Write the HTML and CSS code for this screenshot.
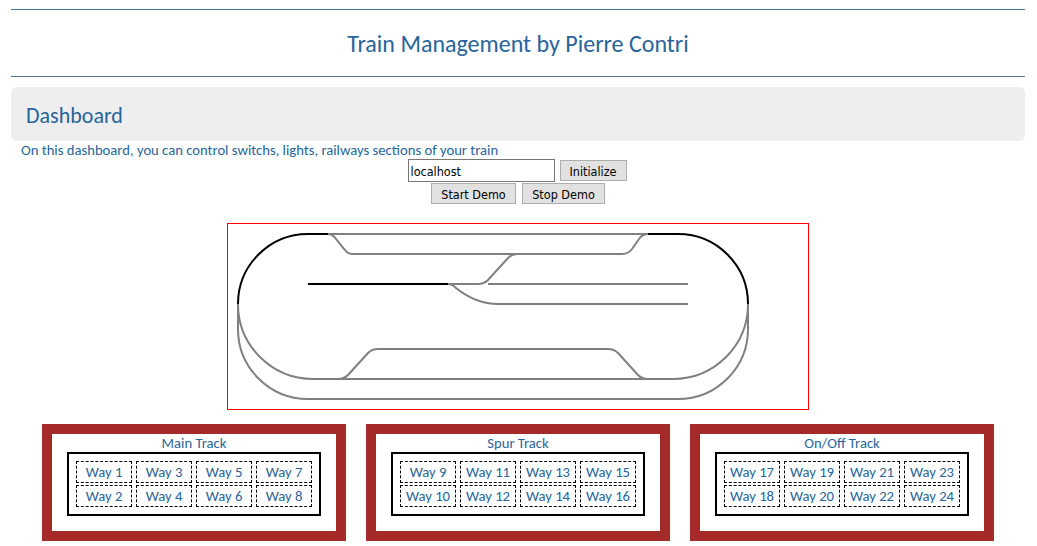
FILE: index.html
```html
<!DOCTYPE html>
<html lang="en">
<head>
<meta charset="utf-8">
<title>Train Management</title>
<link rel="stylesheet" href="styles.css">
</head>
<body>
<header class="site-header"><h1 class="site-title">Train Management by Pierre Contri</h1></header>
<main>
<h2 class="section-title">Dashboard</h2>
<p class="intro">On this dashboard, you can control switchs, lights, railways sections of your train</p>
<form class="controls">
<div class="row host-row"><input class="host" type="text" value="localhost"><button class="btn init" type="button">Initialize</button></div>
<div class="row demo"><button class="btn start" type="button">Start Demo</button><button class="btn stop" type="button">Stop Demo</button></div>
</form>
<svg class="tracks" viewBox="228 224 580 185" width="580" height="185">
<g class="rail">
<path d="M328 234H648"/>
<path d="M328 234C332 234 334 236 336 239L345 250C347 253 350 254 353 254"/>
<path d="M353 254H622C626 254 629 253 632 249L639 239C641 236 643 234 648 234"/>
<path d="M448 284H478C484 284 486 282 488 280L508 258C511 255 514 254 518 254"/>
<path d="M488 284H688"/>
<path d="M448 284C452 284 454 286 456 288Q476 304 498 304H688"/>
<path d="M238 304A75 75 0 0 0 313 379H673A75 75 0 0 0 748 304"/>
<path d="M238 304V329A70 70 0 0 0 308 399H678A70 70 0 0 0 748 329V304"/>
<path d="M338 379C343 379 346 377 348 375L368 353C371 350 374 349 378 349H608C612 349 615 350 618 353L638 375C641 378 644 379 648 379"/>
</g>
<g class="rail active">
<path d="M238 304A70 70 0 0 1 308 234H328"/>
<path d="M648 234H678A70 70 0 0 1 748 304"/>
<path d="M308 284H448"/>
</g>
</svg>
<div class="panels">
<section class="panel"><h3 class="panel-title">Main Track</h3><div class="ways"><span class="way">Way 1</span><span class="way">Way 2</span><span class="way">Way 3</span><span class="way">Way 4</span><span class="way">Way 5</span><span class="way">Way 6</span><span class="way">Way 7</span><span class="way">Way 8</span></div></section>
<section class="panel"><h3 class="panel-title">Spur Track</h3><div class="ways"><span class="way">Way 9</span><span class="way">Way 10</span><span class="way">Way 11</span><span class="way">Way 12</span><span class="way">Way 13</span><span class="way">Way 14</span><span class="way">Way 15</span><span class="way">Way 16</span></div></section>
<section class="panel"><h3 class="panel-title">On/Off Track</h3><div class="ways"><span class="way">Way 17</span><span class="way">Way 18</span><span class="way">Way 19</span><span class="way">Way 20</span><span class="way">Way 21</span><span class="way">Way 22</span><span class="way">Way 23</span><span class="way">Way 24</span></div></section>
</div>
</main>
</body>
</html>
```
FILE: styles.css
```css
* { box-sizing: border-box; }
html { overflow: hidden; }
body { margin: 9px 12px 0 11px; background: #fff; color: #27659a; font: 14.67px/18px Carlito, Lato, sans-serif; }
h1, h2, h3, p { margin: 0; font-weight: 400; }
.site-header { height: 68px; border-top: 1px solid #4f7898; border-bottom: 1px solid #4f7898; text-align: center; }
.site-title { font-size: 24px; line-height: 67px; }
.section-title { height: 54px; margin-top: 10px; padding-left: 15px; border-radius: 6px; background: #eee; font-size: 22px; line-height: 58px; }
.intro { height: 18px; padding-left: 10px; line-height: 18px; white-space: nowrap; }
.controls { margin: 0; }
.row { display: flex; justify-content: center; align-items: center; gap: 5px; height: 23px; }
.host-row { padding-right: 2px; }
.demo { gap: 6px; }
.host { width: 147px; height: 23px; padding: 2px 2px 0; border: 1px solid #777; background: #fff; color: #000; font: 12.5px "DejaVu Sans Condensed", sans-serif; }
.btn { height: 21px; padding: 1px 0 0; border: 1px solid #adadad; background: #e1e1e1; color: #000; font: 12.5px "DejaVu Sans Condensed", sans-serif; white-space: nowrap; }
.init { width: 67px; }
.start { width: 85px; }
.stop { width: 83px; }
.tracks { display: block; box-sizing: content-box; margin: 18px 0 0 216px; border: 1px solid red; }
.rail { fill: none; stroke: gray; stroke-width: 2; }
.active { stroke: #000; }
.panels { display: flex; gap: 20px; margin: 14px 0 0 31px; }
.panel { width: 304px; height: 117px; border: 10px solid brown; }
.panel-title { height: 18px; font-size: 14.67px; line-height: 18px; text-align: center; }
.ways { display: grid; grid-template-rows: 22px 22px; grid-auto-columns: 56px; grid-auto-flow: column; gap: 2px 4px; width: 254px; height: 64px; margin-left: 15px; padding: 7px; border: 2px solid #000; }
.way { border: 1px dashed #000; line-height: 21px; text-align: center; white-space: nowrap; }
```
